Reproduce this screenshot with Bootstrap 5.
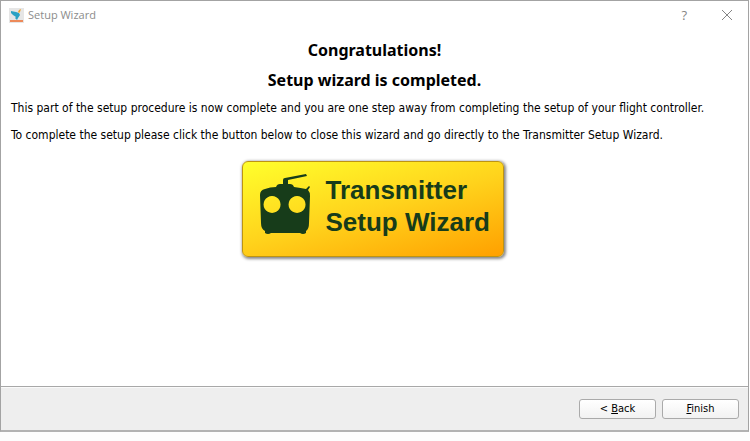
<!DOCTYPE html>
<html lang="en">
<head>
<meta charset="utf-8">
<meta name="viewport" content="width=device-width, initial-scale=1">
<title>Setup Wizard</title>
<link rel="stylesheet" href="https://cdn.jsdelivr.net/npm/bootstrap@5.3.0/dist/css/bootstrap.min.css">
<style>
  body { font-family: Tahoma, "DejaVu Sans Condensed", "Noto Sans", sans-serif; font-size: 12px; color: #000; background: #fdfdfd; }
  .page-frame { padding: 0 1px 9px 0; }
  .wizard { border: 1px solid #a3a3a3; border-bottom: 2px solid #b2b2b2; background: #fff; }
  .title-bar { height: 28px; padding: 0 15px 0 8px; color: #8c8c8c; font-family: "Open Sans", sans-serif; font-size: 11px; }
  .title-bar button { color: #858585; line-height: 1; font-size: 13px; }
  .title-tools { gap: 34px; }
  .wizard-title { font-family: "Noto Sans", sans-serif; font-size: 16px; line-height: 20px; font-weight: 700; margin-bottom: 10px; }
  .wizard-body { padding: 11px 10px 10px; }
  .wizard-body p { line-height: 17px; margin-bottom: 10px; }
  .transmitter-btn { width: 262px; height: 96px; margin-top: 7px; padding: 0 0 0 16px; gap: 14px; border: 1px solid #bd9412; border-radius: 6px; background: linear-gradient(165deg, #ffff2c 0%, #ffd31c 50%, #ffa000 100%); box-shadow: 1px 1px 3px 1px #888; color: #173c1a; font-family: "Liberation Sans", Arial, sans-serif; font-size: 26px; line-height: 32px; font-weight: 700; }
  .transmitter-btn svg { margin-bottom: 10px; }
  .button-caption { margin-bottom: 6px; }
  .action-bar { height: 44px; padding: 0 9px; background: #eee; border-top: 1px solid #a8a8a8; box-shadow: inset 0 1px #fafafa; gap: 6px; }
  .action-bar .btn { --bs-btn-color: #000; --bs-btn-border-color: #aaa; --bs-btn-hover-color: #000; --bs-btn-hover-border-color: #777; width: 77px; height: 20px; padding: 0; border-radius: 3px; background: linear-gradient(#fff, #f2f2f2); font-size: 11px; line-height: 18px; }
</style>
</head>
<body>
<div class="page-frame d-flex flex-column min-vh-100">
<main class="wizard d-flex flex-column flex-grow-1">
  <header class="title-bar d-flex align-items-center">
    <svg width="15" height="15" viewBox="0 0 15 15" aria-hidden="true">
      <path fill="#e6e6e6" d="M0 0h15v15H0z"/>
      <path fill="#2ba2c4" d="M2 3l5 1 3 1 1 2-2 3-1 2-2-2 1-1-3-2-2-2z"/>
      <path fill="#f3a32a" d="M9 4l1-2 2-1-1 3-1 1z"/>
      <path fill="#ed8a5a" d="M1 12h13v2H1z"/>
    </svg>
    <span class="ms-1 me-auto">Setup Wizard</span>
    <div class="title-tools d-flex align-items-center">
      <button type="button" class="btn border-0 p-0" aria-label="Help">?</button>
      <button type="button" class="btn border-0 p-0" aria-label="Close">
        <svg class="d-block" width="12" height="12" viewBox="0 0 12 12" fill="none" stroke="currentColor" aria-hidden="true"><path d="M1 1l10 10M11 1L1 11"/></svg>
      </button>
    </div>
  </header>
  <section class="wizard-body flex-grow-1">
    <h1 class="wizard-title text-center">Congratulations!</h1>
    <h2 class="wizard-title text-center">Setup wizard is completed.</h2>
    <p>This part of the setup procedure is now complete and you are one step away from completing the setup of your flight controller.</p>
    <p>To complete the setup please click the button below to close this wizard and go directly to the Transmitter Setup Wizard.</p>
    <div class="d-flex justify-content-center pe-1">
      <button type="button" class="transmitter-btn d-flex align-items-center text-start">
        <svg width="53" height="60" viewBox="0 0 53 60" fill="currentColor" aria-hidden="true">
          <path fill-rule="evenodd" d="M17 13q1-3 4-3h3V6q0-2 2-2L47 0l1 2-19 4v4h2q3 0 4 3 7 1 12 2l3-3 1 1-2 3q2 2 2 6l-1 27q0 6-3 8v2q-3 2-6 0H12q-3 2-6 0v-2q-4-2-4-8L1 21q0-5 5-6 5-2 11-2zM13 22a8.500 8.500 0 1 0 .1 0M38 22a8.500 8.500 0 1 0 .1 0"/>
        </svg>
        <span class="button-caption">Transmitter<br>Setup Wizard</span>
      </button>
    </div>
  </section>
  <footer class="action-bar d-flex align-items-center justify-content-end">
    <button type="button" class="btn">&lt; <u>B</u>ack</button>
    <button type="button" class="btn"><u>F</u>inish</button>
  </footer>
</main>
</div>
<script src="https://cdn.jsdelivr.net/npm/bootstrap@5.3.0/dist/js/bootstrap.bundle.min.js"></script>
</body>
</html>
